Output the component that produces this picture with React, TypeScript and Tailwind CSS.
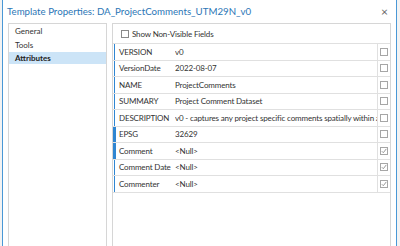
import React from 'react';

type Row = {
  name: string;
  value: string;
  checked?: boolean;
  accent?: 'thin' | 'thick';
};

const rows: Row[] = [
  { name: 'VERSION', value: 'v0' },
  { name: 'VersionDate', value: '2022-08-07' },
  { name: 'NAME', value: 'ProjectComments' },
  { name: 'SUMMARY', value: 'Project Comment Dataset' },
  { name: 'DESCRIPTION', value: 'v0 - captures any project specific comments spatially within a given project area' },
  { name: 'EPSG', value: '32629', accent: 'thick' },
  { name: 'Comment', value: '<Null>', checked: true, accent: 'thick' },
  { name: 'Comment Date', value: '<Null>', checked: true },
  { name: 'Commenter', value: '<Null>', checked: true },
];

function Box({ checked, dark }: { checked?: boolean; dark?: boolean }) {
  return (
    <div
      className={
        'w-[8px] h-[8px] bg-white border flex items-center justify-center ' +
        (dark ? 'border-[#8a8a8a]' : 'border-[#a6a6a6]')
      }
    >
      {checked && (
        <svg width="6" height="6" viewBox="0 0 6 6">
          <path d="M0.8 3.2 L2.3 4.7 L5.3 0.9" fill="none" stroke="#8c8c8c" strokeWidth="0.9" />
        </svg>
      )}
    </div>
  );
}

export default function App() {
  return (
    <div className="w-[400px] h-[246px] overflow-hidden bg-[#f3f3f3] pl-[2px] pr-[3px] text-[#333] font-[Lato,'Noto_Sans',sans-serif]">
      <div className="h-full bg-white border-x border-[#4a98d6] flex flex-col">
        {/* title bar */}
        <div className="h-[23px] shrink-0 flex items-center justify-between pl-[4px] pr-[8px]">
          <span className="text-[9.7px] text-[#2b76b6] leading-none">
            Template Properties: DA_ProjectComments_UTM29N_v0
          </span>
          <span className="text-[12px] text-[#666] leading-none">×</span>
        </div>

        <div className="flex-1 flex gap-[5px] pl-[5px] pr-[5px] min-h-0">
          {/* left nav */}
          <div className="w-[99px] shrink-0 border border-b-0 border-[#d6d6d6] text-[8px]">
            <div className="h-[14px] flex items-center pl-[6px]">General</div>
            <div className="h-[14px] flex items-center pl-[6px]">Tools</div>
            <div className="h-[12px] flex items-center pl-[6px] bg-[#cce4f7] font-bold text-[#222]">Attributes</div>
          </div>

          {/* right panel */}
          <div className="flex-1 border border-b-0 border-[#d6d6d6] flex flex-col text-[8px] tracking-[-0.15px] min-w-0">
            <div className="h-[19px] shrink-0 flex items-center gap-[3px] pl-[8px]">
              <Box dark />
              <span>Show Non-Visible Fields</span>
            </div>
            <div className="border-b border-[#e0e0e0]">
              {rows.map((r) => (
                <div key={r.name} className="h-[16.5px] flex border-t border-[#e0e0e0]">
                  <div className="w-[4px] shrink-0 flex">
                    {r.accent === 'thick' ? (
                      <div className="w-[3px] bg-[#2f86d2]" />
                    ) : (
                      <div className="w-[1px] ml-[1px] bg-[#2f86d2]" />
                    )}
                  </div>
                  <div className="w-[58px] shrink-0 flex items-center pl-[2px] whitespace-nowrap">{r.name}</div>
                  <div className="flex-1 min-w-0 flex items-center overflow-hidden whitespace-nowrap">{r.value}</div>
                  <div className="w-[13px] shrink-0 border-l border-[#e0e0e0] flex items-center justify-center">
                    <Box checked={r.checked} />
                  </div>
                </div>
              ))}
            </div>
          </div>
        </div>
      </div>
    </div>
  );
}
